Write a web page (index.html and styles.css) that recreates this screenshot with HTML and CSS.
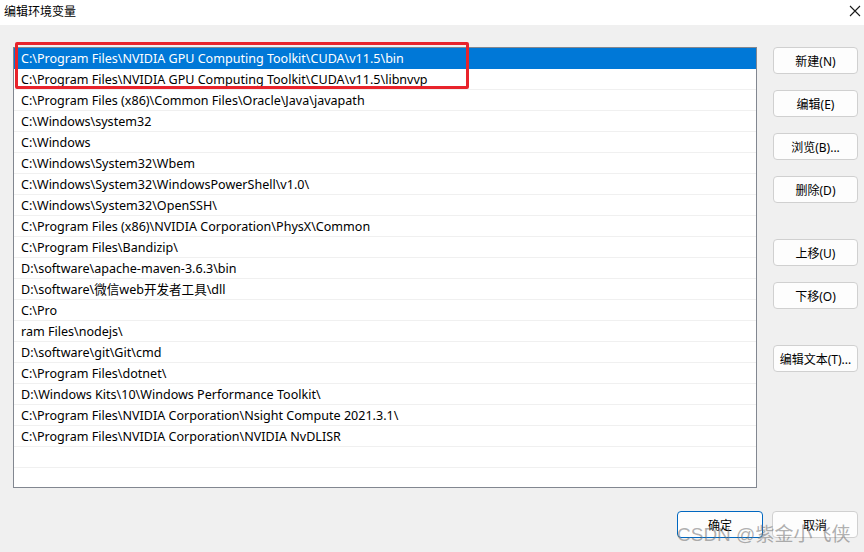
FILE: index.html
```html
<!DOCTYPE html>
<html lang="zh-CN">
<head>
<meta charset="utf-8">
<title>编辑环境变量</title>
<link rel="stylesheet" href="styles.css">
</head>
<body>
<div class="window">
  <div class="titlebar">
    <span class="title">编辑环境变量</span>
    <svg class="close" width="12" height="12" viewBox="0 0 12 12"><path d="M1 1 L11 11 M11 1 L1 11" stroke="#1a1a1a" stroke-width="1.1" fill="none"/></svg>
  </div>
  <div class="content">
    <ul class="list">
      <li class="sel">C:\Program Files\NVIDIA GPU Computing Toolkit\CUDA\v11.5\bin</li>
      <li>C:\Program Files\NVIDIA GPU Computing Toolkit\CUDA\v11.5\libnvvp</li>
      <li>C:\Program Files (x86)\Common Files\Oracle\Java\javapath</li>
      <li>C:\Windows\system32</li>
      <li>C:\Windows</li>
      <li>C:\Windows\System32\Wbem</li>
      <li>C:\Windows\System32\WindowsPowerShell\v1.0\</li>
      <li>C:\Windows\System32\OpenSSH\</li>
      <li>C:\Program Files (x86)\NVIDIA Corporation\PhysX\Common</li>
      <li>C:\Program Files\Bandizip\</li>
      <li>D:\software\apache-maven-3.6.3\bin</li>
      <li>D:\software\微信web开发者工具\dll</li>
      <li>C:\Pro</li>
      <li>ram Files\nodejs\</li>
      <li>D:\software\git\Git\cmd</li>
      <li>C:\Program Files\dotnet\</li>
      <li>D:\Windows Kits\10\Windows Performance Toolkit\</li>
      <li>C:\Program Files\NVIDIA Corporation\Nsight Compute 2021.3.1\</li>
      <li>C:\Program Files\NVIDIA Corporation\NVIDIA NvDLISR</li>
      <li></li>
      <li></li>
    </ul>
    <div class="side">
      <button class="btn">新建(N)</button>
      <button class="btn">编辑(E)</button>
      <button class="btn">浏览(B)...</button>
      <button class="btn">删除(D)</button>
      <button class="btn sep">上移(U)</button>
      <button class="btn">下移(O)</button>
      <button class="btn sep">编辑文本(T)...</button>
    </div>
  </div>
  <div class="footer">
    <button class="btn wide primary">确定</button>
    <button class="btn wide">取消</button>
  </div>
  <div class="highlight"></div>
  <div class="watermark">CSDN @紫金小飞侠</div>
</div>
</body>
</html>
```
FILE: styles.css
```css
html, body {
  margin: 0;
  padding: 0;
}
body {
  background: #f0f0f0;
  font-family: "Noto Sans", "Noto Sans CJK SC", sans-serif;
  font-size: 12px;
  color: #000;
}
.window {
  position: relative;
  width: 864px;
  height: 552px;
  overflow: hidden;
}
.titlebar {
  height: 25px;
  background: #fff;
  display: flex;
  align-items: center;
  justify-content: space-between;
  padding: 0 2px 4px 4px;
  box-sizing: border-box;
}
.title {
  font-family: "Noto Sans CJK SC", sans-serif;
  font-size: 12px;
  color: #000;
}
.close {
  margin-right: 1px;
}
.content {
  display: flex;
  padding: 22px 6px 0 13px;
  gap: 16px;
}
.list {
  list-style: none;
  margin: 0;
  padding: 0;
  width: 742px;
  height: 439px;
  border: 1px solid #828790;
  background: #fff;
  overflow: hidden;
  font-size: 12.55px;
}
.list li {
  height: 19px;
  padding-top: 1px;
  line-height: 19px;
  border-bottom: 1px solid #f0f0f0;
  padding-left: 7px;
  white-space: nowrap;
}
.list li.sel {
  background: #0078d7;
  color: #fff;
  border-bottom-color: #0078d7;
}
.side {
  display: flex;
  flex-direction: column;
  gap: 16px;
  width: 85px;
}
.btn {
  height: 27px;
  width: 85px;
  background: #fdfdfd;
  border: 1px solid #d0d0d0;
  border-radius: 4px;
  font-family: "Noto Sans", "Noto Sans CJK SC", sans-serif;
  font-size: 12px;
  color: #000;
  padding: 0;
}
.btn.sep {
  margin-top: 20px;
}
.footer {
  display: flex;
  justify-content: flex-end;
  gap: 9px;
  padding: 23px 6px 0 0;
}
.btn.wide {
  width: 86px;
}
.btn.primary {
  border-color: #0067c0;
}
.highlight {
  position: absolute;
  left: 15px;
  top: 42px;
  width: 448px;
  height: 41px;
  border: 3px solid #e8232b;
  border-radius: 2px;
}
.watermark {
  position: absolute;
  left: 677px;
  top: 519px;
  font-family: "Liberation Sans", "Noto Sans CJK SC", sans-serif;
  font-size: 19px;
  color: rgba(110, 110, 110, 0.55);
  white-space: nowrap;
}
```
